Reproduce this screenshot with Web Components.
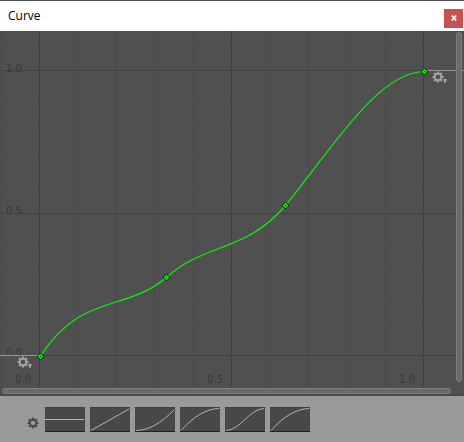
<!DOCTYPE html>
<html lang="en">
<head>
<meta charset="utf-8">
<title>Curve</title>
<style>
html, body { height: 100%; }
body { margin: 0; background: #9a9a9a; font-family: "Open Sans", "Noto Sans", sans-serif; }
</style>
</head>
<body>
<curve-window heading="Curve"></curve-window>
<script>
const define = (name, html, setup) => customElements.define(name, class extends HTMLElement {
  constructor() {
    super();
    this.attachShadow({ mode: "open" });
  }
  connectedCallback() {
    this.shadowRoot.innerHTML = html;
    if (setup) setup(this, this.shadowRoot);
  }
});

const teeth = Array.from({ length: 8 }, (_, i) =>
  `<rect x="4.9" y=".5" width="2.200" height="2.200" transform="rotate(${i * 45} 6 6)"/>`).join("");

define("gear-button", `
<style>
:host { display: block; color: #a4a4a4; }
button { display: block; padding: 0; border: 0; background: none; color: inherit; }
svg { display: block; }
</style>
<button type="button"><svg width="16" height="14" viewBox="0 0 16 14" fill="currentColor">
<circle cx="6" cy="6" r="3.2" fill="none" stroke="currentColor" stroke-width="1.700"/>${teeth}
<path class="arrow" d="M11 8h4l-1.500 4h-1z"/></svg></button>`, (host, root) => {
  root.querySelector("button").setAttribute("aria-label", host.getAttribute("label"));
  if (host.hasAttribute("plain")) {
    root.querySelector(".arrow").remove();
    const svg = root.querySelector("svg");
    svg.setAttribute("width", "12");
    svg.setAttribute("height", "12");
    svg.setAttribute("viewBox", "0 0 12 12");
  }
});

define("title-bar", `
<style>
:host { display: flex; align-items: center; justify-content: space-between; height: 30px; padding: 0 1px 0 8px; background: #fff; border-top: 1px solid #505050; color: #000; font-size: 12px; line-height: 16px; }
button { width: 19px; height: 19px; margin-top: 4px; padding: 0; border: 0; background: #c75050; display: grid; place-items: center; }
</style>
<slot></slot>
<button type="button" aria-label="Close"><svg width="6" height="6" viewBox="0 0 6 6"><path d="M.8 .5 5.200 5.500M5.200 .5 .8 5.500" stroke="#fff" stroke-width="1.700"/></svg></button>`);

const ys = [70, 213, 355], xs = [39, 231, 423];
let grid = "";
for (let i = -1; i <= 10; i++) {
  const x = Math.round(39 + i * 38.4);
  if (!xs.includes(x)) grid += `<path d="M${x + .5} 31V394" stroke="#494949"/>`;
}
for (let i = -1; i <= 11; i++) {
  const y = Math.round(355 - i * 28.5);
  if (y > 32 && !ys.some(v => Math.abs(v - y) < 3)) grid += `<path d="M0 ${y + .5}H464" stroke="#4d4d4d"/>`;
}
grid += xs.map(x => `<path d="M${x + .5} 31V394" stroke="#414141"/>`).join("");
grid += ys.map(y => `<path d="M0 ${y + .5}H464" stroke="#424242"/>`).join("");
const keys = [[40, 356], [166, 277], [285, 205], [424, 71]].map(([x, y]) =>
  `<g transform="translate(${x + .5} ${y + .5})"><path d="M0-4 4 0 0 4-4 0z" fill="#063806"/><path d="M0-2.900 2.900 0 0 2.900-2.900 0z" fill="#10dc10"/><path d="M-.5-.5h1v1h-1z" fill="#0a500a"/></g>`).join("");
const labels = [[6, 72, "1.0"], [6, 214, "0.5"], [6, 356, "0.0"], [15, 383, "0.0"], [207, 383, "0.5"], [399, 383, "1.0"]].map(([x, y, t]) =>
  `<text x="${x}" y="${y}">${t}</text>`).join("");

define("curve-plot", `
<style>
:host { display: block; position: relative; background: #505050; border-bottom: 2px solid #484848; }
.plot { display: block; width: 100%; height: auto; }
text { font: 10px "DejaVu Sans", sans-serif; fill: #393939; }
gear-button { position: absolute; }
.start { left: 17px; top: 89.500%; }
.end { left: 93%; top: 11%; }
.bar { position: absolute; box-sizing: border-box; background: #6b6b6b; border: 1px solid #7d7d7d; border-radius: 4px; }
.h { left: 2px; right: 13px; bottom: 0; height: 6px; }
.v { top: 1px; right: 2px; bottom: 12px; width: 6px; }
</style>
<svg class="plot" viewBox="0 31 464 363" fill="none" role="img" aria-label="Animation curve">
${grid}${labels}
<path d="M0 355.500H40M424 70.500H464" stroke="#959595"/>
<path d="M40.500 356C82 292 124 313 166.500 277.500C206 242 245 253 285.500 205.500C331 150 378 71.500 424.500 71.500" stroke="#00fa00" stroke-width="1.200"/>
${keys}
</svg>
<gear-button class="start" label="Pre-wrap mode"></gear-button>
<gear-button class="end" label="Post-wrap mode"></gear-button>
<div class="bar h"></div><div class="bar v"></div>`);

define("curve-preset", `
<style>
:host { display: block; }
button { display: block; box-sizing: border-box; width: 40px; height: 25px; padding: 0; border: 0; border-bottom: 1px solid #202020; border-top: 1px solid #404040; background: #484848; }
svg { display: block; }
</style>
<button type="button"><svg width="40" height="23" viewBox="0 0 40 23" fill="none"><path stroke="#b4b4b4"/></svg></button>`, (host, root) => {
  root.querySelector("path").setAttribute("d", host.getAttribute("shape"));
  root.querySelector("button").setAttribute("aria-label", host.getAttribute("label"));
});

define("preset-bar", `
<style>
:host { display: flex; align-items: center; gap: 5px; padding: 11px 0 10px 27px; background: #9a9a9a; }
gear-button { color: #484848; margin: 6px 1px 0 0; }
</style>
<gear-button plain label="Preset options"></gear-button>
<curve-preset label="Constant" shape="M0 11.500H39"></curve-preset>
<curve-preset label="Linear" shape="M1 22.500L39 1"></curve-preset>
<curve-preset label="Ease in" shape="M1 22.500C14 22.500 26 15 39 2"></curve-preset>
<curve-preset label="Ease out" shape="M1 22.500C14 8 26 1 39 .5"></curve-preset>
<curve-preset label="Ease in and out" shape="M1 22.500C15 22.500 25 .5 39 .5"></curve-preset>
<curve-preset label="Smooth" shape="M1 22.500C14 8 26 1 39 .5"></curve-preset>`);

define("curve-window", `
<style>:host { display: block; }</style>
<title-bar></title-bar>
<curve-plot></curve-plot>
<preset-bar></preset-bar>`, (host, root) => {
  root.querySelector("title-bar").append(host.getAttribute("heading"));
});
</script>
</body>
</html>
